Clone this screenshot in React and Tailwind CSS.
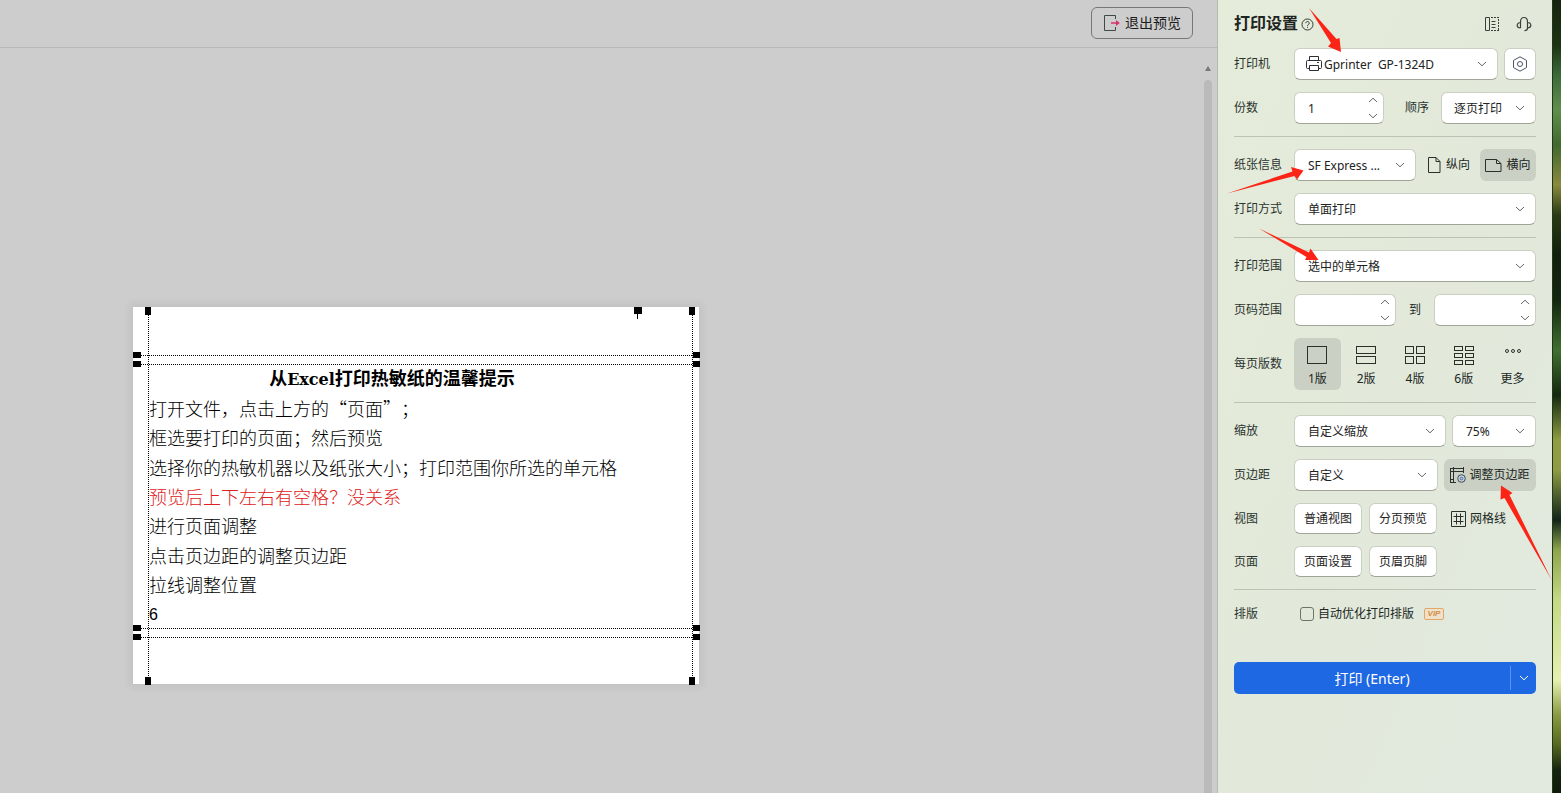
const LAYOUTS = [
  { key: '1', label: '1版', cols: 1, rows: 1 },
  { key: '2', label: '2版', cols: 1, rows: 2 },
  { key: '4', label: '4版', cols: 2, rows: 2 },
  { key: '6', label: '6版', cols: 2, rows: 3 },
]

const LINES = [
  { text: '打开文件，点击上方的“页面”；' },
  { text: '框选要打印的页面；然后预览' },
  { text: '选择你的热敏机器以及纸张大小；打印范围你所选的单元格' },
  { text: '预览后上下左右有空格？没关系', red: true },
  { text: '进行页面调整' },
  { text: '点击页边距的调整页边距' },
  { text: '拉线调整位置' },
]

const BOX = 'border border-[#c9cfc1] border-b-[#9fa597] rounded-md bg-white text-[#222]'

function Chevron({ up = false, className = '' }) {
  return (
    <svg className={`pointer-events-none ${className}`} width="10" height="6" viewBox="0 0 10 6" fill="none" stroke="currentColor" strokeWidth="1">
      <path d={up ? 'M1 5 5 1.2 9 5' : 'M1 1 5 4.8 9 1'} />
    </svg>
  )
}

function Select({ id, label, value, className = '', pad = 'pl-[13px]', icon }) {
  return (
    <div className={`relative ${className}`}>
      {icon}
      <select id={id} aria-label={label} className={`${BOX} ${pad} h-8 w-full appearance-none pt-[2px] pr-6`}>
        <option>{value}</option>
      </select>
      <Chevron className="absolute right-[11px] top-[13px] text-[#666]" />
    </div>
  )
}

function Stepper({ id, label, value = '', className = '' }) {
  return (
    <div className={`relative ${className}`}>
      <input id={id} aria-label={label} type="text" inputMode="numeric" defaultValue={value} className={`${BOX} h-8 w-full pl-[13px] pr-5`} />
      <div className="absolute inset-y-0 right-[6px] flex flex-col justify-between py-[5px] text-[#666]">
        <button type="button" aria-label="增加"><Chevron up className="block" /></button>
        <button type="button" aria-label="减少"><Chevron className="block" /></button>
      </div>
    </div>
  )
}

function Row({ label, htmlFor, children, className = '' }) {
  return (
    <div className={`flex items-center ${className}`}>
      {htmlFor
        ? <label htmlFor={htmlFor} className="w-[60px] shrink-0 text-[#2a332f]">{label}</label>
        : <span className="w-[60px] shrink-0 text-[#2a332f]">{label}</span>}
      {children}
    </div>
  )
}

function Divider() {
  return <hr className="border-0 h-px bg-[#bcc3b5]" />
}

function LayoutIcon({ cols, rows }) {
  const gap = 2
  const w = (20 - (cols - 1) * gap) / cols
  const h = ((rows === 3 ? 19 : 18) - (rows - 1) * gap) / rows
  const cells = []
  for (let r = 0; r < rows; r++) {
    for (let c = 0; c < cols; c++) {
      cells.push(<rect key={`${r}-${c}`} x={0.5 + c * (w + gap)} y={0.5 + r * (h + gap)} width={w - 1} height={h - 1} />)
    }
  }
  return <svg width="20" height="20" viewBox="0 0 20 20" fill="none" stroke="#2b302a" strokeWidth="1">{cells}</svg>
}

function Sheet() {
  return (
    <article className="relative flex h-[377px] w-[566px] flex-col bg-white pt-[57px] pb-14 pl-4 text-[18px] leading-[18px] text-black shadow-[0_0_7px_4px_rgba(0,0,0,0.05)] [text-spacing-trim:space-all] font-['Noto_Sans_CJK_SC',sans-serif]">
      <h1 className="flex w-[486px] flex-1 items-center justify-center font-bold">
        <span>从<span className="text-[16px] font-['DejaVu_Serif',serif]">Excel</span>打印热敏纸的温馨提示</span>
      </h1>
      {LINES.map(l => (
        <p key={l.text} className={`flex flex-1 items-center font-light whitespace-nowrap ${l.red ? 'text-[#e02020]' : ''}`}>{l.text}</p>
      ))}
      <p className="flex flex-1 items-center text-[16px] font-['Liberation_Sans',sans-serif]"><span className="pt-1">6</span></p>

      {/* margin guides and their drag handles */}
      <svg className="absolute inset-0 overflow-visible" width="566" height="377" viewBox="0 0 566 377" shapeRendering="crispEdges">
        <g stroke="#000" strokeWidth="1" strokeDasharray="1 1">
          <path d="M15.5 8V370M559.5 8V370" />
          <path d="M8 48.5H560M8 57.5H560M8 321.5H560M8 330.5H560" />
        </g>
        <path d="M12 0h6v8h-6zM556 0h6v8h-6zM12 370h6v8h-6zM556 370h6v8h-6z" />
        <path d="M0 45h8v6H0zM0 54h8v6H0zM0 318h8v6H0zM0 327h8v6H0z" />
        <path d="M560 45h7v6h-7zM560 54h7v6h-7zM560 318h7v6h-7zM560 327h7v6h-7z" />
        <path d="M501 0h8v7h-8zM504 7h1v5h-1z" />
      </svg>
    </article>
  )
}

function Preview() {
  return (
    <main className="flex min-w-0 flex-1 flex-col bg-[#cdcdcd]">
      <header className="flex h-12 items-center justify-end border-b border-[#b9b9b9] pr-6">
        <button type="button" className="mb-px flex h-8 items-center gap-[5px] rounded-md border border-[#777] pr-[11px] pb-[2px] pl-3 text-[14px] text-[#1c1c1c]">
          <svg className="mt-[2px]" width="16" height="16" viewBox="0 0 16 16" fill="none">
            <path d="M11.500 4V.500H.500v15h11V12" stroke="#3d4a45" />
            <path d="M7 8h6" stroke="#d6336c" strokeWidth="1.500" />
            <path d="m12 5 3.800 3L12 11z" fill="#d6336c" />
          </svg>
          退出预览
        </button>
      </header>
      <div className="flex flex-1 justify-between">
        <div className="pt-[259px] pl-[133px]"><Sheet /></div>
        <div className="mr-[5px] flex w-2 flex-col items-center pt-[18px]">
          <svg width="6" height="5" viewBox="0 0 6 5"><path d="M3 0 6 5H0z" fill="#777" /></svg>
          <div className="mt-[9px] w-2 flex-1 rounded-t bg-[#bababa]" />
        </div>
      </div>
    </main>
  )
}

function Arrows() {
  return (
    <svg className="pointer-events-none absolute top-0 left-0" width="334" height="793" viewBox="0 0 334 793" fill="#fb2416">
      <path d="M91 8 118.500 39 121.500 38 123 52 110 46.500 113 43z" />
      <path d="M9 193.500 74.500 171.500 73 167 85.500 170.500 79 179.500 76.500 176z" />
      <path d="M41 228.500 91 252.500 92.500 248.500 100.500 260 87 260 88.500 257z" />
      <path d="M333.700 580 286.500 498 282.500 499.500 283 485.500 294.500 493 291.500 495z" />
    </svg>
  )
}

function Settings() {
  return (
    <aside className="relative w-[335px] shrink-0 border-l border-[#b5b9b2] bg-linear-to-br from-[#e5ecda] via-[#e2e9da] to-[#e2eae0] px-4 text-[12px] text-[#20261f]">
      <header className="flex h-12 items-center justify-between pr-1">
        <div className="flex items-center gap-[3px]">
          <h2 className="pb-[2px] text-[16px] font-bold text-[#1e241f]">打印设置</h2>
          <svg width="13" height="13" viewBox="0 0 13 13" fill="none" stroke="#333a33">
            <circle cx="6.500" cy="6.500" r="5.500" />
            <path d="M4.800 5.200a1.700 1.700 0 1 1 2.600 1.400c-.6.4-.9.700-.9 1.300M6.500 8.800v1" />
          </svg>
        </div>
        <div className="flex gap-4">
          <button type="button" aria-label="停靠">
            <svg className="block" width="16" height="16" viewBox="0 0 16 16" fill="none" stroke="#39413a">
              <path d="M5.500 1.500h-4v13h4z" />
              <path d="M7 1.500h8M14.500 3v11M7 14.500h8" strokeDasharray="2 1" />
              <path d="M7.500 5.500h4M7.500 8.500h4M7.500 11.500h4" />
            </svg>
          </button>
          <button type="button" aria-label="客服">
            <svg className="block" width="16" height="16" viewBox="0 0 16 16" fill="none" stroke="#39413a" strokeWidth="1.200">
              <path d="M4.500 12V6C4.500 3 6 1.500 8 1.500S11.500 3 11.500 6v6c0 1.600-1 2.700-3 2.700M4.500 6.500C2.500 6.500 1.200 7.800 1.200 9.300S2.500 12 4.500 12M11.500 6.500c2 0 3.300 1.300 3.300 2.800S13.500 12 11.500 12" />
            </svg>
          </button>
        </div>
      </header>

      <div className="flex flex-col gap-3">
        <Row label="打印机" htmlFor="printer">
          <Select
            id="printer"
            value={'Gprinter\u00a0\u00a0GP-1324D'}
            className="mr-[6px] flex-1"
            pad="pl-[29px]"
            icon={
              <svg className="pointer-events-none absolute left-3 top-2" width="16" height="16" viewBox="0 0 16 16" fill="none" stroke="#2b2f36">
                <path d="M3.500 4.500v-4h9v4M3.500 12.500h-2a1 1 0 0 1-1-1v-6a1 1 0 0 1 1-1h13a1 1 0 0 1 1 1v6a1 1 0 0 1-1 1h-2M3.500 9.500h9v5h-9zM11 6.500h2" />
              </svg>
            }
          />
          <button type="button" aria-label="打印机属性" className={`${BOX} flex size-8 items-center justify-center`}>
            <svg width="16" height="16" viewBox="0 0 16 16" fill="none" stroke="#4b5563">
              <path d="M8 .8 14.500 4.400v7.200L8 15.200 1.500 11.600V4.400z" />
              <circle cx="8" cy="8" r="2.500" />
            </svg>
          </button>
        </Row>
        <Row label="份数" htmlFor="copies">
          <Stepper id="copies" value="1" className="w-[90px]" />
          <label htmlFor="order" className="ml-auto text-[#2a332f]">顺序</label>
          <Select id="order" value="逐页打印" className="ml-3 w-[95px]" pad="pl-3" />
        </Row>

        <Divider />

        <Row label="纸张信息" htmlFor="paper">
          <Select id="paper" value="SF Express ..." className="w-[122px]" />
          <button type="button" className="ml-auto flex h-8 items-center gap-[5px]">
            <svg width="13" height="16" viewBox="0 0 13 16" fill="none" stroke="#2b302a">
              <path d="M.500.500h7.500l4 4v11H.500zM8 .500v4h4" />
            </svg>
            纵向
          </button>
          <button type="button" aria-pressed="true" className="ml-[10px] flex h-8 w-14 items-center justify-center gap-1 rounded-md bg-[#cad0c3]">
            <svg width="17" height="13" viewBox="0 0 17 13" fill="none" stroke="#2b302a">
              <path d="M.500.500h11l4.500 4v8H.500zM11.500.500v4H16" />
            </svg>
            横向
          </button>
        </Row>
        <Row label="打印方式" htmlFor="duplex">
          <Select id="duplex" value="单面打印" className="flex-1" />
        </Row>

        <Divider />

        <Row label="打印范围" htmlFor="range">
          <Select id="range" value="选中的单元格" className="flex-1" />
        </Row>
        <Row label="页码范围" htmlFor="from">
          <Stepper id="from" className="w-[102px]" />
          <label htmlFor="to" className="flex-1 text-center">到</label>
          <Stepper id="to" className="w-[102px]" />
        </Row>
        <Row label="每页版数">
          <div className="flex flex-1 gap-[2px]">
            {LAYOUTS.map((l, i) => (
              <button key={l.key} type="button" aria-pressed={i === 0} className={`flex h-[52px] flex-1 flex-col items-center justify-end gap-1 rounded-md pb-[2px] leading-[18px] ${i === 0 ? 'bg-[#cad0c3]' : ''}`}>
                <LayoutIcon cols={l.cols} rows={l.rows} />
                {l.label}
              </button>
            ))}
            <button type="button" className="flex h-[52px] flex-1 flex-col items-center justify-end gap-1 pb-[2px] leading-[18px]">
              <svg width="18" height="20" viewBox="0 0 18 20" fill="none" stroke="#2b302a">
                <circle cx="3" cy="5" r="1.500" /><circle cx="9" cy="5" r="1.500" /><circle cx="15" cy="5" r="1.500" />
              </svg>
              更多
            </button>
          </div>
        </Row>

        <Divider />

        <Row label="缩放" htmlFor="scale">
          <Select id="scale" value="自定义缩放" className="mr-[6px] flex-1" />
          <Select label="缩放比例" value="75%" className="w-[84px]" />
        </Row>
        <Row label="页边距" htmlFor="margin">
          <Select id="margin" value="自定义" className="mr-[6px] flex-1" />
          <button type="button" aria-pressed="true" className="flex h-8 w-[92px] items-center justify-center gap-[3px] rounded-md bg-[#cad0c3]">
            <svg width="16" height="16" viewBox="0 0 16 16" fill="none" stroke="#2b302a">
              <path d="M.500 1v15M3.500 0v16M0 1.500h14M0 4.500h14M13.500 0v6M0 15.500h6M0 12.500h4" />
              <circle cx="11.500" cy="11.500" r="3.800" stroke="#3b4a66" />
              <circle cx="11.500" cy="11.500" r="1.300" stroke="#3b6bc0" />
            </svg>
            调整页边距
          </button>
        </Row>
        <Row label="视图">
          <div className="flex gap-[7px]">
            <button type="button" className={`${BOX} h-[31px] w-[68px]`}>普通视图</button>
            <button type="button" className={`${BOX} h-[31px] w-[68px]`}>分页预览</button>
          </div>
          <button type="button" className="ml-[14px] flex items-center gap-1">
            <svg width="15" height="16" viewBox="0 0 15 16" fill="none" stroke="#2b302a">
              <path d="M.500.500h14v15H.500zM5.500 2.500v11M9.500 2.500v11M2.500 5.500h10M2.500 10.500h10" />
            </svg>
            网格线
          </button>
        </Row>
        <Row label="页面">
          <div className="flex gap-[7px]">
            <button type="button" className={`${BOX} h-[31px] w-[68px]`}>页面设置</button>
            <button type="button" className={`${BOX} h-[31px] w-[68px]`}>页眉页脚</button>
          </div>
        </Row>

        <Divider />

        <Row label="排版" className="h-6">
          <input id="optimize" type="checkbox" className="ml-[6px] size-[14px] appearance-none rounded-[3px] border border-[#6d746a]" />
          <label htmlFor="optimize" className="ml-1">自动优化打印排版</label>
          <span className="ml-[10px] flex h-3 w-5 items-center justify-center rounded-[2px] border border-[#e0a868] bg-[#f0e2c9] text-[8px] font-bold italic text-[#d18f4a] font-['Liberation_Sans',sans-serif]">VIP</span>
        </Row>

        <div className="mt-6 flex h-8 items-center rounded-[5px] bg-[#1e69e3] text-white">
          <button type="button" className="h-full flex-1 text-[14px]">打印 (Enter)</button>
          <button type="button" aria-label="更多打印选项" className="flex h-6 w-[26px] items-center justify-center border-l border-[#5b94ee]">
            <Chevron />
          </button>
        </div>
      </div>

      <Arrows />
    </aside>
  )
}

export default function App() {
  return (
    <div lang="zh-CN" className="flex min-h-screen font-['Noto_Sans','Noto_Sans_CJK_SC',sans-serif]">
      <Preview />
      <Settings />
      {/* desktop wallpaper beside the window */}
      <div className="w-[9px] shrink-0 border-l border-[#24361a] bg-[linear-gradient(to_bottom,#16240f_0px,#1c3413_45px,#3b6a3a_75px,#5f8f4c_110px,#41692f_145px,#8a8a3d_185px,#2a3a15_215px,#0f1f0c_255px,#13260f_300px,#3f7030_350px,#14280f_395px,#8f9c42_440px,#8f9c42_470px,#10241a_520px,#8ea54c_550px,#c5d886_600px,#e6f0b0_680px,#8a9a42_715px,#56681f_745px,#15240f_770px,#0d1a0a_793px)]" />
    </div>
  )
}
